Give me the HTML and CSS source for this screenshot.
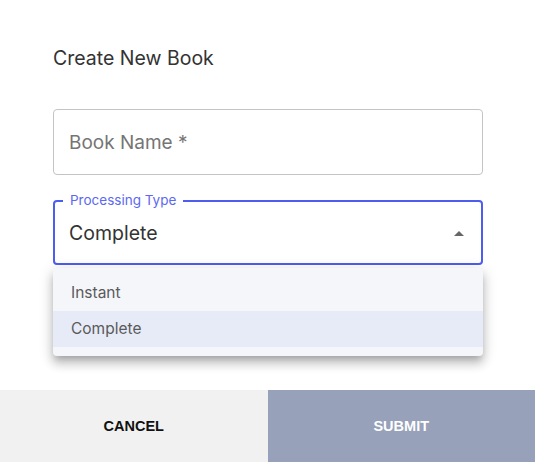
FILE: index.html
```html
<!DOCTYPE html>
<html>
<head>
<meta charset="utf-8">
<link rel="stylesheet" href="styles.css">
</head>
<body>
<div class="dialog">
  <div class="content">
    <h2 class="title">Create New Book</h2>
    <div class="field">
      <span class="placeholder">Book Name *</span>
    </div>
    <div class="select-wrap">
      <div class="field focused">
        <span class="legend">Processing Type</span>
        <span class="value">Complete</span>
        <span class="arrow"></span>
      </div>
      <ul class="menu">
        <li class="item">Instant</li>
        <li class="item selected">Complete</li>
      </ul>
    </div>
  </div>
  <div class="actions">
    <button class="btn cancel">CANCEL</button>
    <button class="btn submit">SUBMIT</button>
  </div>
</div>
</body>
</html>
```

FILE: styles.css
```css
html, body {
  margin: 0;
  padding: 0;
  background: #ffffff;
}
body {
  font-family: "Inter", "Open Sans", sans-serif;
  width: 535px;
  height: 462px;
  overflow: hidden;
}
.dialog {
  width: 535px;
  height: 462px;
  display: flex;
  flex-direction: column;
}
.content {
  flex: 1;
  padding: 45px 52px 0 53px;
}
.title {
  margin: 0 0 38px 0;
  font-size: 19.5px;
  font-weight: 400;
  color: #333333;
  line-height: 26px;
}
.field {
  box-sizing: border-box;
  height: 66px;
  border: 1px solid #c4c4c4;
  border-radius: 4px;
  display: flex;
  align-items: center;
  padding: 0 15px;
  position: relative;
}
.placeholder {
  font-size: 19px;
  color: #757575;
}
.select-wrap {
  margin-top: 25px;
  position: relative;
}
.field.focused {
  height: 65px;
  border: 2px solid #4e5cf0;
  padding: 0 14px;
}
.legend {
  position: absolute;
  left: 8px;
  top: -11px;
  background: #ffffff;
  padding: 0 7px;
  font-size: 13.5px;
  color: #5b69f2;
  line-height: 18px;
}
.value {
  font-size: 19.5px;
  color: #333333;
  flex: 1;
  padding-top: 0;
}
.arrow {
  width: 0;
  height: 0;
  border-left: 5px solid transparent;
  border-right: 5px solid transparent;
  border-bottom: 5px solid #666666;
  margin-right: 3px;
  margin-top: 1px;
}
.menu {
  position: absolute;
  left: 0;
  right: 0;
  top: 68px;
  margin: 0;
  padding: 7px 0 9px 0;
  list-style: none;
  background: #f5f6fa;
  border-radius: 4px;
  box-shadow: 0 5px 6px -3px rgba(0,0,0,0.2), 0 8px 10px 1px rgba(0,0,0,0.14), 0 3px 14px 2px rgba(0,0,0,0.12);
}
.item {
  height: 36px;
  line-height: 36px;
  padding: 0 18px;
  font-size: 15.5px;
  color: #5a5a5a;
}
.item.selected {
  background: #e7ebf8;
}
.actions {
  display: flex;
  height: 72px;
}
.btn {
  flex: 1;
  border: none;
  margin: 0;
  font-family: "Liberation Sans", Arial, sans-serif;
  font-weight: 700;
  font-size: 14.5px;
  letter-spacing: 0;
}
.cancel {
  background: #f1f1f1;
  color: #111111;
}
.submit {
  background: #97a1b9;
  color: #ffffff;
}
```
